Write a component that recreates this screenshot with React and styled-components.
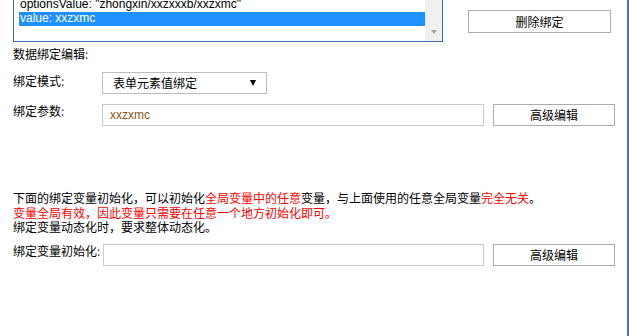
import React from "react";
import styled, { createGlobalStyle } from "styled-components";

const Global = createGlobalStyle`
  html, body { margin: 0; padding: 0; background: #fff; }
  body {
    font-family: "Liberation Sans", "Noto Sans CJK SC", sans-serif;
    font-size: 12px;
    color: #000;
    overflow: hidden;
  }
  * { box-sizing: border-box; }
`;

const Page = styled.div`
  width: 629px;
  height: 336px;
  padding-left: 13px;
  border-right: 2px solid #4a70b6;
  overflow: hidden;
`;

const TopRow = styled.div`
  display: flex;
  align-items: flex-start;
`;

const ListBox = styled.div`
  width: 430px;
  height: 52px;
  margin-top: -10px;
  border: 1px solid #3c6cb6;
  display: flex;
  overflow: hidden;
  background: #fff;
`;

const Options = styled.div`
  flex: 1;
  padding: 7px 0 0 5px;
`;

const Option = styled.div`
  height: 14px;
  line-height: 12px;
  padding-left: 1px;
  white-space: nowrap;
  font-family: "Liberation Sans", sans-serif;
  color: ${(p) => (p.$selected ? "#fff" : "#000")};
  background: ${(p) => (p.$selected ? "#1e90ff" : "transparent")};
`;

const ScrollBar = styled.div`
  width: 17px;
  background: #f0f0f0;
  display: flex;
  flex-direction: column;
  justify-content: flex-end;
  align-items: center;
  padding-bottom: 7px;
`;

const ScrollArrow = styled.div`
  width: 0;
  height: 0;
  border-left: 3.5px solid transparent;
  border-right: 3.5px solid transparent;
  border-top: 4px solid #a3a3a3;
`;

const Button = styled.button`
  width: ${(p) => p.$w || 122}px;
  height: ${(p) => p.$h || 22}px;
  margin-left: ${(p) => p.$ml || 9}px;
  margin-top: ${(p) => p.$mt || 0}px;
  padding: 0;
  border: 1px solid #acacac;
  background: #fff;
  font-family: "Noto Sans CJK SC", sans-serif;
  font-size: 12px;
  line-height: 14px;
  color: #000;
  flex-shrink: 0;
`;

const Colon = styled.span`
  color: #8b1a3a;
`;

const SectionTitle = styled.div`
  margin-top: 5px;
  line-height: 14px;
  font-family: "Noto Sans CJK SC", sans-serif;
`;

const FormRow = styled.div`
  display: flex;
  align-items: flex-start;
  margin-top: ${(p) => p.$mt}px;
`;

const Label = styled.div`
  width: ${(p) => p.$w}px;
  padding-top: ${(p) => p.$pt || 0}px;
  line-height: 14px;
  white-space: nowrap;
  font-family: "Noto Sans CJK SC", sans-serif;
  flex-shrink: 0;
`;

const Select = styled.div`
  width: 165px;
  height: 22px;
  border: 1px solid #bdbdbd;
  display: flex;
  align-items: center;
  justify-content: space-between;
  padding: 0 10px 0 10px;
  font-family: "Noto Sans CJK SC", sans-serif;
  line-height: 14px;
`;

const SelectArrow = styled.span`
  width: 0;
  height: 0;
  border-left: 3px solid transparent;
  border-right: 3px solid transparent;
  border-top: 6px solid #000;
`;

const Input = styled.div`
  width: ${(p) => p.$w}px;
  height: 22px;
  border: 1px solid #c5cad1;
  padding-left: 7px;
  display: flex;
  align-items: center;
  font-family: "Liberation Sans", sans-serif;
  color: #8a5520;
  flex-shrink: 0;
`;

const Paragraph = styled.p`
  margin: 65px 0 0 0;
  line-height: 14.5px;
  font-family: "Noto Sans CJK SC", sans-serif;
  white-space: nowrap;
`;

const Red = styled.span`
  color: #ff0000;
`;

export default function App() {
  return (
    <>
      <Global />
      <Page>
        <TopRow>
          <ListBox>
            <Options>
              <Option>optionsValue: "zhongxin/xxzxxxb/xxzxmc"</Option>
              <Option $selected>value: xxzxmc</Option>
            </Options>
            <ScrollBar>
              <ScrollArrow />
            </ScrollBar>
          </ListBox>
          <Button $w={143} $h={23} $ml={25} $mt={10}>删除绑定</Button>
        </TopRow>

        <SectionTitle>
          数据绑定编辑<Colon>:</Colon>
        </SectionTitle>

        <FormRow $mt={11}>
          <Label $w={89} $pt={2}>
            绑定模式<Colon>:</Colon>
          </Label>
          <Select>
            <span>表单元素值绑定</span>
            <SelectArrow />
          </Select>
        </FormRow>

        <FormRow $mt={10}>
          <Label $w={89}>
            绑定参数<Colon>:</Colon>
          </Label>
          <Input $w={382}>xxzxmc</Input>
          <Button>高级编辑</Button>
        </FormRow>

        <Paragraph>
          下面的绑定变量初始化，可以初始化<Red>全局变量中的任意</Red>变量，与上面使用的任意全局变量<Red>完全无关</Red>。
          <br />
          <Red>变量全局有效，因此变量只需要在任意一个地方初始化即可。</Red>
          <br />
          绑定变量动态化时，要求整体动态化。
        </Paragraph>

        <FormRow $mt={9}>
          <Label $w={90}>
            绑定变量初始化<Colon>:</Colon>
          </Label>
          <Input $w={381} />
          <Button>高级编辑</Button>
        </FormRow>
      </Page>
    </>
  );
}
